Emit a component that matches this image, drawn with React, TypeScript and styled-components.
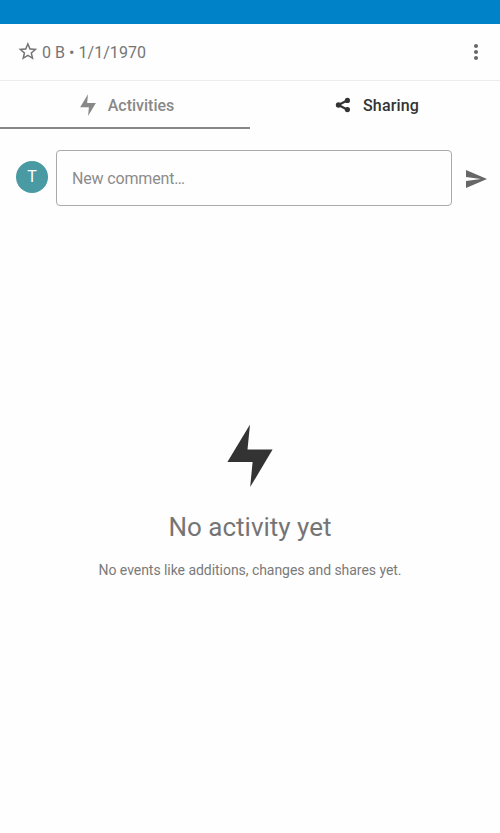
import React from 'react';
import styled, { createGlobalStyle } from 'styled-components';

const GlobalStyle = createGlobalStyle`
  * { box-sizing: border-box; }
  body { margin: 0; background: #fff; font-family: Roboto, sans-serif; }
`;

const Screen = styled.main`
  display: flex;
  flex-direction: column;
  height: 833px;
  overflow: hidden;
  background: #fefefe;
`;

const StatusBar = styled.div`
  flex: none;
  height: 24px;
  background: #0082c9;
`;

const FileHeader = styled.header`
  flex: none;
  display: flex;
  align-items: center;
  height: 57px;
  padding: 0 12px 0 18px;
  border-bottom: 1px solid #ededed;
  color: #666;
`;

const FileMeta = styled.span`
  flex: 1;
  margin-left: 4px;
  padding-top: 2px;
  color: #757575;
  font-size: 16px;
  line-height: 20px;
  letter-spacing: 0.04px;
`;

const IconButton = styled.button`
  display: flex;
  padding: 0;
  border: 0;
  background: none;
  color: #666;
`;

const SendButton = styled(IconButton)`
  padding-top: 2px;
`;

const Tabs = styled.nav`
  flex: none;
  display: grid;
  grid-template-columns: 1fr 1fr;
  height: 48px;
`;

const Tab = styled.button<{ $active?: boolean }>`
  display: flex;
  align-items: center;
  justify-content: center;
  gap: 8px;
  padding: 2px 0 0;
  border: 0;
  border-bottom: 2px solid ${p => (p.$active ? '#888' : 'transparent')};
  background: none;
  color: ${p => (p.$active ? '#888' : '#333')};
  font: 500 16px/20px Roboto, sans-serif;
`;

const TabLabel = styled.span<{ $spacing?: string }>`
  padding-top: 2px;
  letter-spacing: ${p => p.$spacing ?? 'normal'};
`;

const CommentRow = styled.form`
  flex: none;
  display: flex;
  align-items: center;
  margin-top: 21px;
  padding: 0 12px 0 16px;
`;

const Avatar = styled.div`
  display: flex;
  align-items: center;
  justify-content: center;
  width: 32px;
  height: 32px;
  margin: -2px 8px 0 0;
  padding-bottom: 1px;
  border-radius: 50%;
  background: #499aa2;
  color: #fff;
  font-size: 16px;
`;

const CommentInput = styled.input`
  flex: 1;
  min-width: 0;
  height: 56px;
  margin-right: 12px;
  padding: 0 15px;
  border: 1px solid #aaa;
  border-radius: 4px;
  background: #fefefe;
  font: 16px/20px Roboto, sans-serif;
  letter-spacing: -0.15px;
  &::placeholder { color: #8c8c8c; opacity: 1; }
`;

const EmptyState = styled.section`
  display: flex;
  flex-direction: column;
  align-items: center;
  margin-top: 214px;
`;

const EmptyTitle = styled.h1`
  margin: 25px 0 0;
  color: #757575;
  font-size: 26px;
  font-weight: 400;
  line-height: 30px;
`;

const EmptyText = styled.p`
  margin: 20px 0 0;
  color: #7a7a7a;
  font-size: 14px;
  line-height: 16px;
  letter-spacing: -0.045px;
`;

const Icon = ({ d }: { d: string }) => (
  <svg width="24" height="24" viewBox="0 0 24 24" fill="currentColor" aria-hidden="true"><path d={d} /></svg>
);

const MORE = 'M12 8c1.100 0 2-.9 2-2s-.9-2-2-2-2 .9-2 2 .9 2 2 2zm0 2c-1.100 0-2 .9-2 2s.9 2 2 2 2-.9 2-2-.9-2-2-2zm0 6c-1.100 0-2 .9-2 2s.9 2 2 2 2-.9 2-2-.9-2-2-2z';
const SEND = 'M2.010 21L23 12 2.010 3 2 10l15 2-15 2z';

const StarIcon = () => (
  <svg width="20" height="20" viewBox="1.500 2 21.300 21.300" fill="#757575" aria-hidden="true">
    <path d="M22 9.24l-7.190-.62L12 2 9.190 8.630 2 9.240l5.460 4.730L5.820 21 12 17.270 18.180 21l-1.630-7.030L22 9.240zM12 15.400l-3.760 2.270 1-4.280-3.320-2.880 4.380-.38L12 6.100l1.710 4.040 4.380.38-3.320 2.880 1 4.280L12 15.400z" />
  </svg>
);

const Bolt = ({ width, height }: { width: number; height: number }) => (
  <svg width={width} height={height} viewBox="0 0 46 63" preserveAspectRatio="none" fill="currentColor" aria-hidden="true">
    <path d="M23 0.500L0.400 38H25.600L23.200 63L45.600 25.500H20.500Z" />
  </svg>
);

const ShareIcon = () => (
  <svg width="16" height="16" viewBox="0 0 16 16" fill="currentColor" aria-hidden="true">
    <path d="M3.500 8L12.500 3.300M3.500 8L12.500 12.700" stroke="currentColor" strokeWidth="2.100" />
    <circle cx="3.500" cy="8" r="2.700" />
    <circle cx="12.400" cy="3.400" r="2.600" />
    <circle cx="12.400" cy="12.600" r="2.600" />
  </svg>
);

const TabIcon = styled.span`
  display: flex;
  align-items: center;
  justify-content: center;
  width: 24px;
  height: 24px;
`;

const EmptyIcon = styled.div`
  display: flex;
  margin-top: 4px;
  color: #333;
`;

export default function App() {
  return (
    <>
      <GlobalStyle />
      <Screen>
        <StatusBar />
        <FileHeader>
          <StarIcon />
          <FileMeta>0 B • 1/1/1970</FileMeta>
          <IconButton aria-label="More options"><Icon d={MORE} /></IconButton>
        </FileHeader>
        <Tabs>
          <Tab $active><TabIcon><Bolt width={16} height={22} /></TabIcon><TabLabel>Activities</TabLabel></Tab>
          <Tab><TabIcon><ShareIcon /></TabIcon><TabLabel $spacing="0.15px">Sharing</TabLabel></Tab>
        </Tabs>
        <CommentRow>
          <Avatar>T</Avatar>
          <CommentInput placeholder="New comment…" />
          <SendButton type="button" aria-label="Send"><Icon d={SEND} /></SendButton>
        </CommentRow>
        <EmptyState>
          <EmptyIcon><Bolt width={46} height={63} /></EmptyIcon>
          <EmptyTitle>No activity yet</EmptyTitle>
          <EmptyText>No events like additions, changes and shares yet.</EmptyText>
        </EmptyState>
      </Screen>
    </>
  );
}
